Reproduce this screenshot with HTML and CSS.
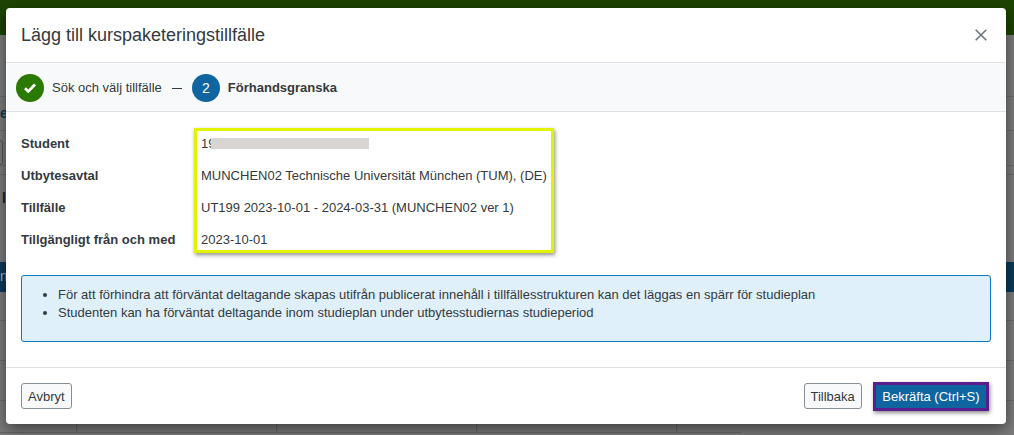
FILE: index.html
```html
<!DOCTYPE html>
<html lang="sv">
<head>
<meta charset="utf-8">
<title>Lägg till kurspaketeringstillfälle</title>
<link rel="stylesheet" href="styles.css">
</head>
<body>
<div class="page">
  <div class="topbar"></div>
  <div class="rule r96"></div>
  <div class="rule r130"></div>
  <div class="rule r165"></div>
  <div class="rule r174"></div>
  <div class="rule r320"></div>
  <div class="rule r360"></div>
  <div class="rule r400"></div>
  <div class="peek-btn"></div>
  <span class="peek p113">e</span>
  <span class="peek p198">l</span>
  <div class="backband"><span class="band-text">n</span></div>
  <div class="table-peek">
    <span class="cell c1"></span><span class="cell c2"></span><span class="cell c2"></span><span class="cell c2"></span><span class="cell c3"></span>
  </div>
</div>
<div class="modal">
  <header class="modal-head">
    <h1 class="modal-title">Lägg till kurspaketeringstillfälle</h1>
    <svg class="close" width="12" height="12" viewBox="0 0 12 12"><path d="M.7.7l10.6 10.6M11.3.7L.7 11.3" stroke="#6c757d" stroke-width="1.6" fill="none"/></svg>
  </header>
  <nav class="steps">
    <span class="dot done"><svg width="14" height="12" viewBox="0 0 14 12"><path d="M2 6.2l3.3 3.2L12 2.6" stroke="#fff" stroke-width="2.8" fill="none"/></svg></span>
    <span class="step-label">Sök och välj tillfälle</span>
    <span class="dash"></span>
    <span class="dot current">2</span>
    <span class="step-label strong">Förhandsgranska</span>
  </nav>
  <section class="modal-body">
    <div class="details">
      <dl class="grid">
        <dt>Student</dt><dd class="student">19<span class="redact"></span></dd>
        <dt>Utbytesavtal</dt><dd>MUNCHEN02 Technische Universität München (TUM), (DE)</dd>
        <dt>Tillfälle</dt><dd>UT199 2023-10-01 - 2024-03-31 (MUNCHEN02 ver 1)</dd>
        <dt>Tillgängligt från och med</dt><dd>2023-10-01</dd>
      </dl>
      <div class="highlight"></div>
    </div>
    <div class="info">
      <ul>
        <li>För att förhindra att förväntat deltagande skapas utifrån publicerat innehåll i tillfällesstrukturen kan det läggas en spärr för studieplan</li>
        <li>Studenten kan ha förväntat deltagande inom studieplan under utbytesstudiernas studieperiod</li>
      </ul>
    </div>
  </section>
  <footer class="modal-foot">
    <button class="btn">Avbryt</button>
    <span class="spacer"></span>
    <button class="btn">Tillbaka</button>
    <button class="btn primary">Bekräfta (Ctrl+S)</button>
  </footer>
</div>
</body>
</html>
```
FILE: styles.css
```css
* { box-sizing: border-box; }
html, body { margin: 0; height: 100%; }
body { width: 1014px; height: 435px; overflow: hidden; background: #7c7c7c; font-family: "Liberation Sans", Arial, sans-serif; font-size: 13px; color: #212529; position: relative; }
.page { position: absolute; inset: 0; }
.topbar { height: 35px; background: #1c4400; }
.rule { position: absolute; left: 0; right: 0; height: 1px; background: #6c6c6c; }
.r96 { top: 96px; }
.r130 { top: 130px; }
.r165 { top: 165px; }
.r174 { top: 174px; }
.r320 { top: 320px; }
.r360 { top: 360px; }
.r400 { top: 400px; }
.peek-btn { position: absolute; left: -6px; top: 140px; width: 9px; height: 25px; border: 1px solid #555; border-radius: 3px; }
.peek { position: absolute; font-weight: 700; color: #0b3a57; font-size: 14px; }
.p113 { left: 0; top: 105px; }
.p198 { left: 2px; top: 190px; color: #222; }
.backband { position: absolute; left: 0; right: 0; top: 262px; height: 30px; background: #0a3a5c; }
.band-text { position: absolute; left: 0; top: 6px; color: #9fb4c2; font-size: 14px; }
.table-peek { position: absolute; left: 0; top: 424px; width: 741px; height: 9px; display: flex; border-bottom: 1px solid #666; }
.cell { border-right: 1px solid #666; }
.c1 { width: 77px; }
.c2 { width: 200px; }
.c3 { width: 64px; border-right: 0; }
.modal { position: absolute; left: 6px; top: 8px; width: 1000px; height: 416px; background: #fff; border-radius: 4px; box-shadow: 0 5px 15px rgba(0,0,0,.5); display: flex; flex-direction: column; }
.modal-head { height: 55px; display: flex; align-items: center; justify-content: space-between; padding: 0 19px 0 15px; border-bottom: 1px solid #dee2e6; }
.modal-title { margin: 0; font-size: 18px; font-weight: 400; color: #343a40; }
.close { display: block; }
.steps { height: 49px; display: flex; align-items: center; padding: 1px 10px 0; background: #f8f9fa; border-bottom: 1px solid #dee2e6; }
.dot { width: 28px; height: 28px; border-radius: 50%; display: flex; align-items: center; justify-content: center; color: #fff; font-size: 14px; }
.dot.done { background: #2b7a00; }
.dot.current { background: #0f659f; }
.step-label { margin-left: 8px; color: #343a40; }
.step-label.strong { font-weight: 700; }
.dash { width: 10px; height: 1px; background: #343a40; margin: 1px 10px 0; }
.modal-body { flex: 1; padding: 15px 15px 0; }
.details { position: relative; height: 148px; }
.grid { margin: 0; display: grid; grid-template-columns: 180px 1fr; grid-auto-rows: 32px; align-items: center; }
.grid dt { font-weight: 700; color: #343a40; }
.grid dd { margin: 0; color: #343a40; }
.student { display: flex; align-items: center; }
.redact { width: 158px; height: 11px; margin-left: -4px; background: #d8d5d2; }
.highlight { position: absolute; left: 173px; top: 1px; width: 360px; height: 125px; border: 3px solid #e2f300; box-shadow: 1px 2px 4px rgba(0,0,0,.45); }
.info { height: 67px; background: #dff0fb; border: 1px solid #0a79c8; border-radius: 3px; padding: 10px 0 0 0; color: #343a40; }
.info ul { margin: 0; padding: 0 0 0 36px; }
.info li { line-height: 18px; }
.modal-foot { height: 57px; display: flex; align-items: center; gap: 11px; padding: 0 17px 0 15px; border-top: 1px solid #dee2e6; }
.spacer { flex: 1; }
.btn { height: 26px; padding: 0 6px; font: 13px "Liberation Sans", Arial, sans-serif; color: #343a40; background: #f8f9fa; border: 1px solid #868e96; border-radius: 3px; }
.btn.primary { height: 29px; padding: 0 6.5px; background: #0f659f; color: #fff; border: 3px solid #5a1d8c; border-radius: 0; box-shadow: 1px 2px 4px rgba(0,0,0,.45); }
```
